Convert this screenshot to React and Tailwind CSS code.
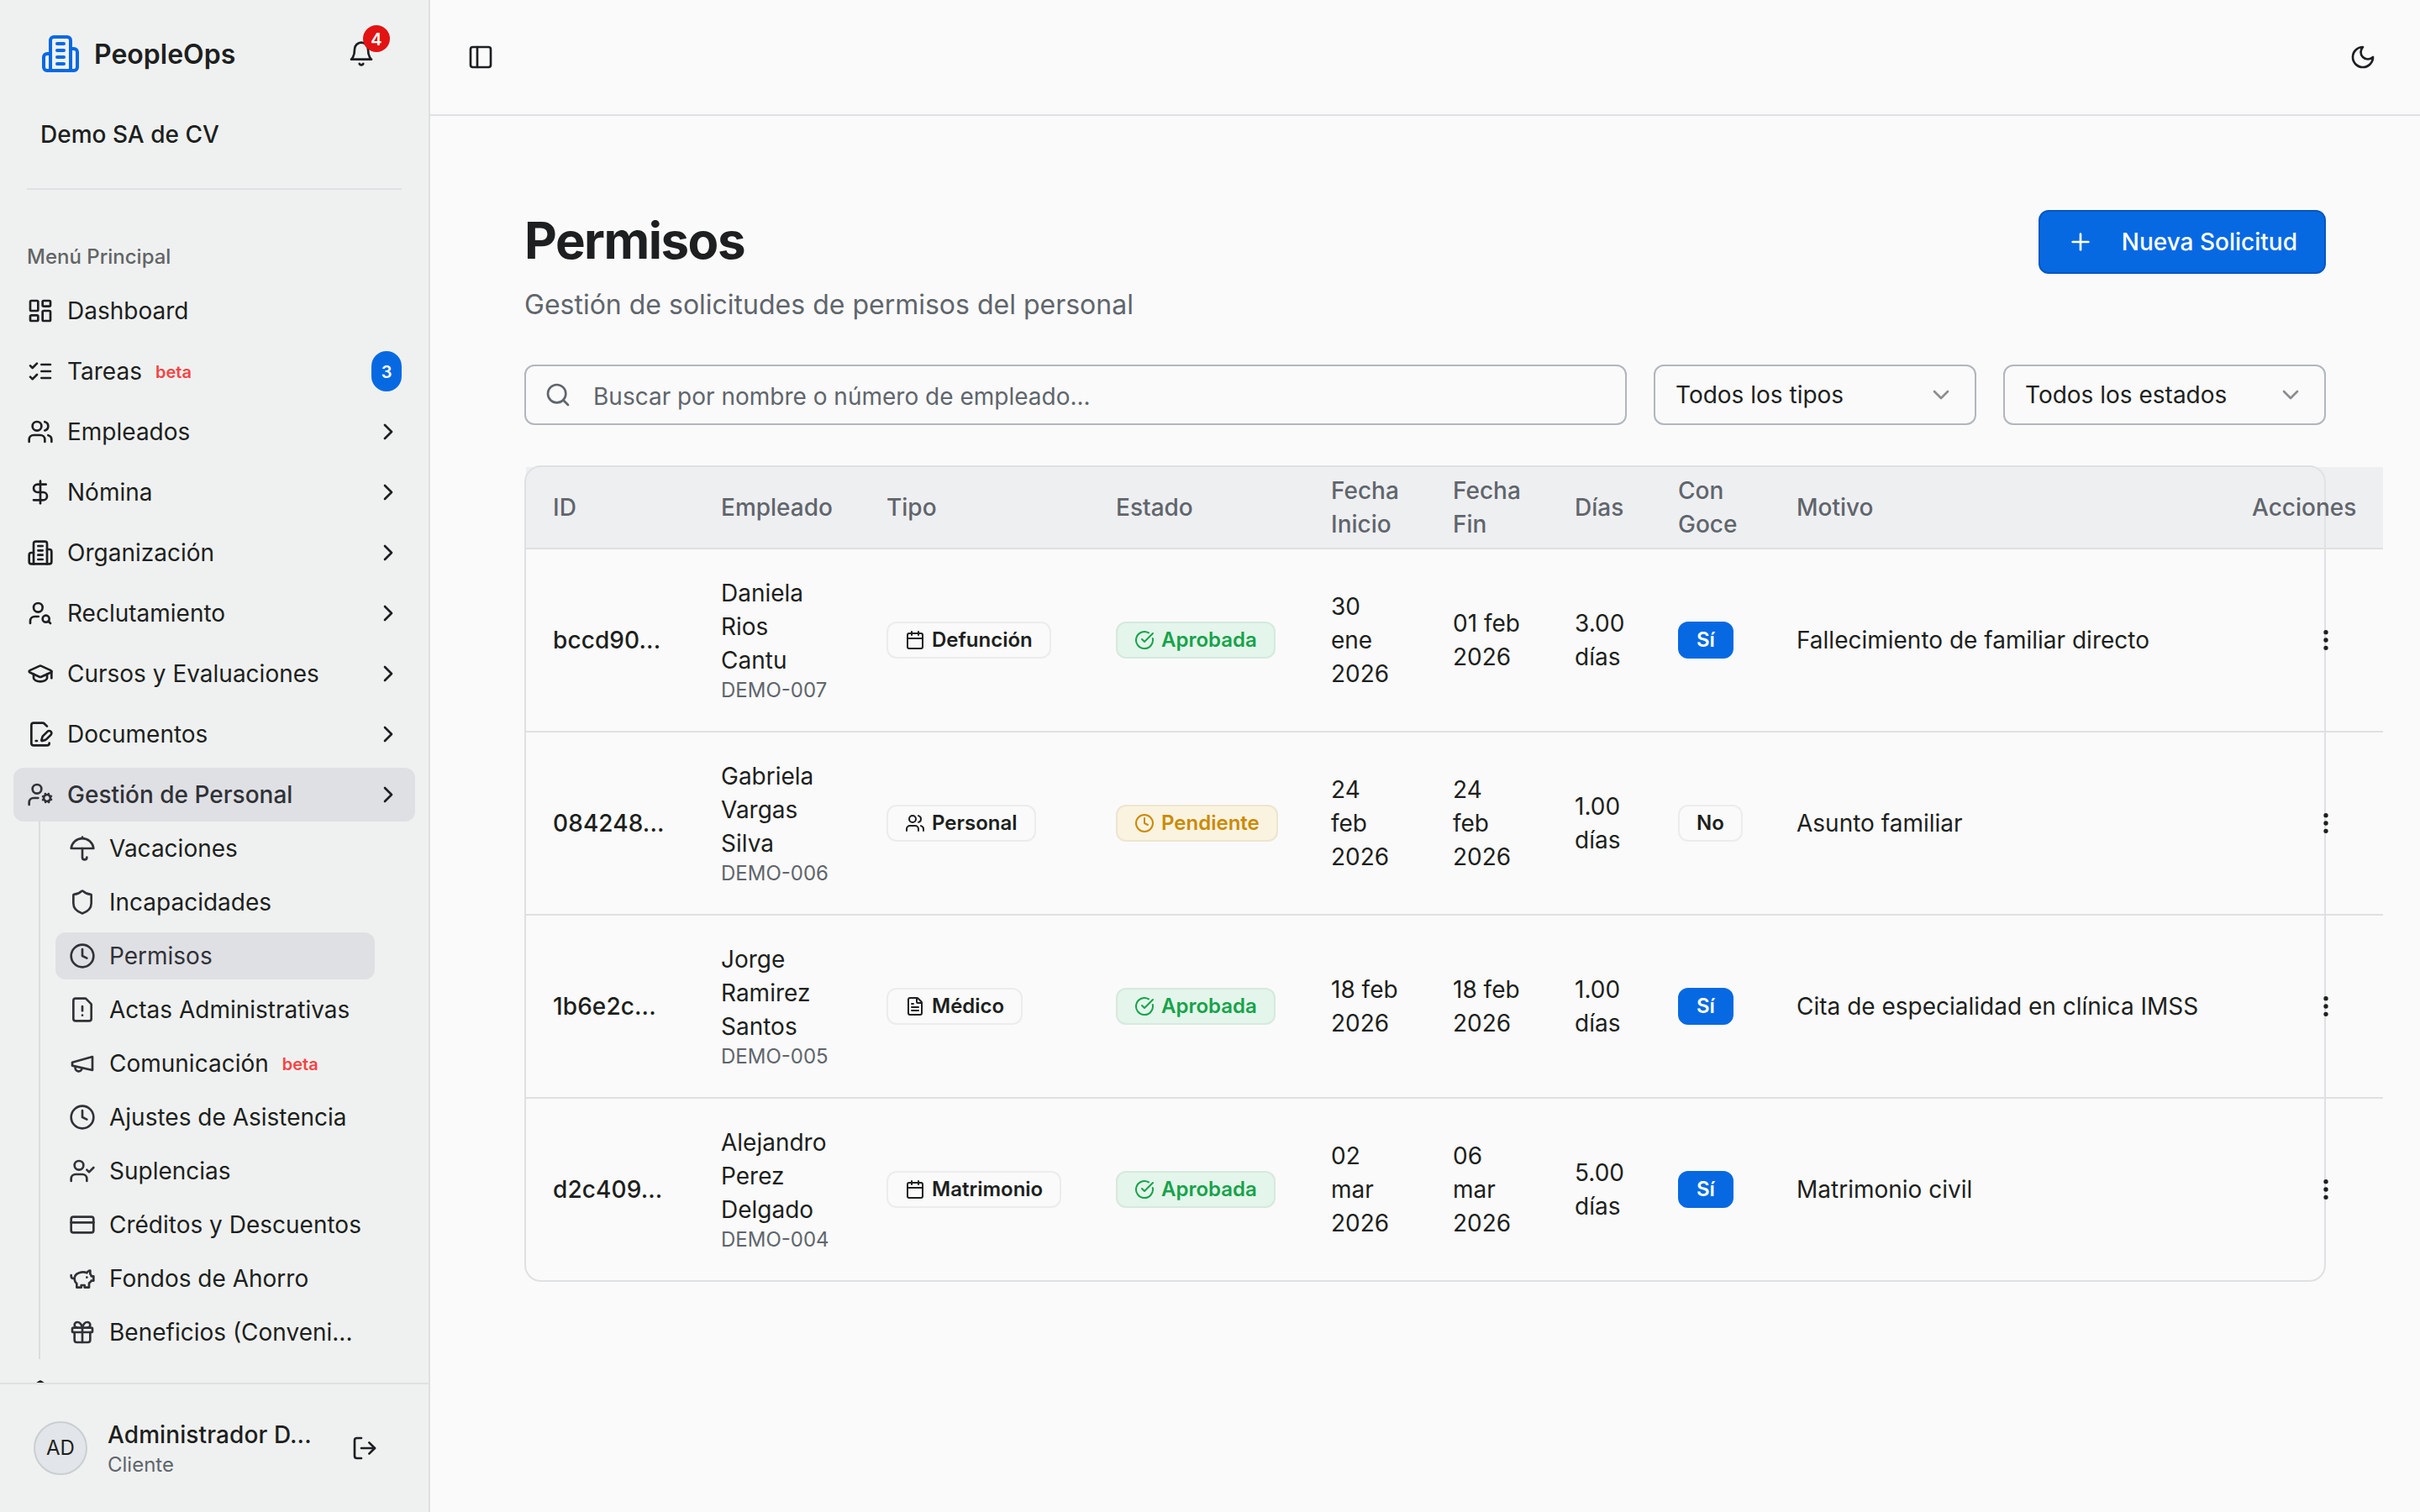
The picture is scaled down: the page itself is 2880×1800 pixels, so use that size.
import React from 'react';
import {
    Calendar,
    ChevronDown,
    ChevronRight,
    Clock,
    CreditCard,
    DollarSign,
    EllipsisVertical,
    FileText,
    Gift,
    GraduationCap,
    LayoutDashboard,
    LogOut,
    PanelLeft,
    Plus,
    Search,
    Shield,
    UserCheck,
    UserSearch,
    Users,
} from 'lucide-react';

const Icon = ({ className, children }) => (
    <svg viewBox="0 0 24 24" fill="none" stroke="currentColor" strokeWidth="2" strokeLinecap="round" strokeLinejoin="round" className={className}>
        {children}
    </svg>
);

const BuildingIcon = ({ className }) => (
    <Icon className={className}>
        <path d="M6 22V4a2 2 0 0 1 2-2h8a2 2 0 0 1 2 2v18Z" />
        <path d="M6 12H4a2 2 0 0 0-2 2v6a2 2 0 0 0 2 2h2" />
        <path d="M18 9h2a2 2 0 0 1 2 2v9a2 2 0 0 1-2 2h-2" />
        <path d="M10 6h4M10 10h4M10 14h4M10 18h4" />
    </Icon>
);

const BellIcon = ({ className }) => (
    <Icon className={className}>
        <path d="M6 8a6 6 0 0 1 12 0c0 7 3 9 3 9H3s3-2 3-9" />
        <path d="M10.3 21a1.94 1.94 0 0 0 3.4 0" />
    </Icon>
);

const TasksIcon = ({ className }) => (
    <Icon className={className}>
        <path d="m3 17 2 2 4-4" />
        <path d="m3 7 2 2 4-4" />
        <path d="M13 6h8M13 12h8M13 18h8" />
    </Icon>
);

const FileEditIcon = ({ className }) => (
    <Icon className={className}>
        <path d="m18 5-2.414-2.414A2 2 0 0 0 14.172 2H6a2 2 0 0 0-2 2v16a2 2 0 0 0 2 2h12a2 2 0 0 0 2-2" />
        <path d="M21.378 12.626a1 1 0 0 0-3.004-3.004l-4.01 4.012a2 2 0 0 0-.506.854l-.837 2.87a.5.5 0 0 0 .62.62l2.87-.837a2 2 0 0 0 .854-.506z" />
        <path d="M8 18h1" />
    </Icon>
);

const UserCogIcon = ({ className }) => (
    <Icon className={className}>
        <circle cx="18" cy="15" r="3" />
        <circle cx="9" cy="7" r="4" />
        <path d="M10 15H6a4 4 0 0 0-4 4v2" />
        <path d="m21.7 16.4-.9-.3M15.2 13.9l-.9-.3M16.6 18.7l.3-.9M19.1 12.2l.3-.9" />
        <path d="m19.6 18.7-.4-1M16.8 12.3l-.4-1M14.3 16.6l1-.4M20.7 13.8l1-.4" />
    </Icon>
);

const UmbrellaIcon = ({ className }) => (
    <Icon className={className}>
        <path d="M22 12a10.06 10.06 1 0 0-20 0Z" />
        <path d="M12 12v8a2 2 0 0 0 4 0" />
        <path d="M12 2v1" />
    </Icon>
);

const FileWarningIcon = ({ className }) => (
    <Icon className={className}>
        <path d="M15 2H6a2 2 0 0 0-2 2v16a2 2 0 0 0 2 2h12a2 2 0 0 0 2-2V7Z" />
        <path d="M12 9v4" />
        <path d="M12 17h.01" />
    </Icon>
);

const MegaphoneIcon = ({ className }) => (
    <Icon className={className}>
        <path d="m3 11 18-5v12L3 14v-3z" />
        <path d="M11.6 16.8a3 3 0 1 1-5.8-1.6" />
    </Icon>
);

const PiggyIcon = ({ className }) => (
    <Icon className={className}>
        <path d="M19 5c-1.5 0-2.8 1.4-3 2-3.5-1.5-11-.3-11 5 0 1.8 0 3 2 4.5V20h4v-2h3v2h4v-4c1-.5 1.7-1 2-2h2v-4h-2c0-1-.5-1.5-1-2V5z" />
        <path d="M2 9v1c0 1.1.9 2 2 2h1" />
        <path d="M16 11h.01" />
    </Icon>
);

const MoonIcon = ({ className }) => (
    <Icon className={className}>
        <path d="M12 3a6 6 0 0 0 9 9 9 9 0 1 1-9-9Z" />
    </Icon>
);

const CheckIcon = ({ className }) => (
    <Icon className={className}>
        <path d="M21.801 10A10 10 0 1 1 17 3.335" />
        <path d="m9 11 3 3L22 4" />
    </Icon>
);

const menu = [
    { label: 'Dashboard', icon: LayoutDashboard },
    { label: 'Tareas', icon: TasksIcon, beta: true, count: 3 },
    { label: 'Empleados', icon: Users, sub: true },
    { label: 'Nómina', icon: DollarSign, sub: true },
    { label: 'Organización', icon: BuildingIcon, sub: true },
    { label: 'Reclutamiento', icon: UserSearch, sub: true },
    { label: 'Cursos y Evaluaciones', icon: GraduationCap, sub: true },
    { label: 'Documentos', icon: FileEditIcon, sub: true },
    { label: 'Gestión de Personal', icon: UserCogIcon, sub: true, active: true },
];

const submenu = [
    { label: 'Vacaciones', icon: UmbrellaIcon },
    { label: 'Incapacidades', icon: Shield },
    { label: 'Permisos', icon: Clock, active: true },
    { label: 'Actas Administrativas', icon: FileWarningIcon },
    { label: 'Comunicación', icon: MegaphoneIcon, beta: true },
    { label: 'Ajustes de Asistencia', icon: Clock },
    { label: 'Suplencias', icon: UserCheck },
    { label: 'Créditos y Descuentos', icon: CreditCard },
    { label: 'Fondos de Ahorro', icon: PiggyIcon },
    { label: 'Beneficios (Conveni...', icon: Gift },
];

const columns = [
    { label: 'ID', width: 'w-[200px]' },
    { label: 'Empleado', width: 'w-[197px]' },
    { label: 'Tipo', width: 'w-[273px]' },
    { label: 'Estado', width: 'w-[256px]' },
    { label: 'Fecha Inicio', width: 'w-[145px]' },
    { label: 'Fecha Fin', width: 'w-[145px]' },
    { label: 'Días', width: 'w-[123px]' },
    { label: 'Con Goce', width: 'w-[141px]' },
    { label: 'Motivo', width: 'w-[542px]' },
    { label: 'Acciones', width: 'w-[188px]' },
];

const rows = [
    { id: 'bccd90...', name: ['Daniela', 'Rios', 'Cantu'], code: 'DEMO-007', type: 'Defunción', icon: Calendar, approved: true, start: ['30', 'ene', '2026'], end: ['01 feb', '2026'], days: '3.00', paid: true, reason: 'Fallecimiento de familiar directo' },
    { id: '084248...', name: ['Gabriela', 'Vargas', 'Silva'], code: 'DEMO-006', type: 'Personal', icon: Users, approved: false, start: ['24', 'feb', '2026'], end: ['24', 'feb', '2026'], days: '1.00', paid: false, reason: 'Asunto familiar' },
    { id: '1b6e2c...', name: ['Jorge', 'Ramirez', 'Santos'], code: 'DEMO-005', type: 'Médico', icon: FileText, approved: true, start: ['18 feb', '2026'], end: ['18 feb', '2026'], days: '1.00', paid: true, reason: 'Cita de especialidad en clínica IMSS' },
    { id: 'd2c409...', name: ['Alejandro', 'Perez', 'Delgado'], code: 'DEMO-004', type: 'Matrimonio', icon: Calendar, approved: true, start: ['02', 'mar', '2026'], end: ['06', 'mar', '2026'], days: '5.00', paid: true, reason: 'Matrimonio civil' },
];

const Lines = ({ items }) => items.map((item, index) => <div key={index}>{item}</div>);

const Beta = () => <span className="ml-4 pt-0.5 text-[20px] leading-[32px] font-semibold text-[#f44444]">beta</span>;

const Sidebar = () => (
    <aside className="w-[512px] h-full shrink-0 flex flex-col bg-[#eff1f0] border-r-2 border-[#dfe0e1]">
        <div className="h-[226px] shrink-0 mx-8 border-b-2 border-[#dfe0e1]">
            <div className="h-[128px] pl-4 pr-4 flex items-center">
                <BuildingIcon className="size-12 text-[#0769e2]" />
                <span className="ml-4 pt-0.5 text-[32px] leading-[40px] font-semibold">PeopleOps</span>
                <div className="relative ml-auto mr-4">
                    <BellIcon className="size-8" />
                    <span className="absolute -top-[18px] left-[18px] size-8 pt-0.5 rounded-full bg-[#e21313] text-white text-[20px] font-semibold flex items-center justify-center">4</span>
                </div>
            </div>
            <div className="pl-4 pt-3 text-[28px] leading-[40px] font-medium">Demo SA de CV</div>
        </div>

        <div className="flex-1 min-h-0 overflow-hidden px-4">
            <div className="mt-12 h-16 px-4 flex items-center text-[24px] font-medium text-[#626566]">Menú Principal</div>
            <nav className="flex flex-col gap-2">
                {menu.map((item) => (
                    <div key={item.label} className={`h-16 px-4 rounded-xl flex items-center text-[28px] ${item.active ? 'bg-[#dfe0e4] text-[#303237] font-medium' : ''}`}>
                        <item.icon className="size-8 shrink-0" />
                        <span className="ml-4">{item.label}</span>
                        {item.beta && <Beta />}
                        {item.count && <span className="ml-auto w-9 h-12 pt-0.5 rounded-full bg-[#0769e2] text-white text-[20px] font-semibold flex items-center justify-center">{item.count}</span>}
                        {item.sub && <ChevronRight className="ml-auto size-8 text-[#1d1f20]" />}
                    </div>
                ))}
            </nav>
            <div className="ml-[30px] mr-12 pl-[18px] py-1 border-l-2 border-[#dadcdd] flex flex-col gap-2">
                {submenu.map((item) => (
                    <div key={item.label} className={`h-14 px-4 rounded-xl flex items-center text-[28px] whitespace-nowrap ${item.active ? 'bg-[#dfe0e4] text-[#303237]' : ''}`}>
                        <item.icon className="size-8 shrink-0 text-[#303237]" />
                        <span className="ml-4">{item.label}</span>
                        {item.beta && <Beta />}
                    </div>
                ))}
            </div>
            <div className="mt-6 px-4">
                <Shield className="size-8" />
            </div>
        </div>

        <div className="h-[154px] shrink-0 border-t-2 border-[#dfe0e1] pl-10 pr-[60px] flex items-center">
            <div className="size-16 shrink-0 rounded-full border-2 border-[#cbced1] bg-[#e2e5e9] flex items-center justify-center text-[24px]">AD</div>
            <div className="ml-6">
                <div className="text-[28px] leading-[40px] font-medium tracking-[0.1px]">Administrador D...</div>
                <div className="text-[24px] leading-[32px] text-[#60656c]">Cliente</div>
            </div>
            <LogOut className="ml-auto size-8" />
        </div>
    </aside>
);

const Select = ({ label }) => (
    <div className="w-[384px] h-[72px] shrink-0 px-6 rounded-xl border-2 border-[#b1b6bd] flex items-center justify-between text-[28px]">
        {label}
        <ChevronDown className="size-8 text-[#8b8d8f]" />
    </div>
);

const badge = 'inline-flex items-center h-11 px-5 rounded-xl border-2 text-[24px] font-semibold';

const PermissionsTable = () => (
    <div className="mt-12 h-[972px] rounded-[20px] border-2 border-[#dfe0e1]">
        <table className="table-fixed w-[2210px] border-separate border-spacing-0 text-[28px] leading-[40px] text-left">
            <thead>
                <tr className="h-[98px] bg-[#e2e4e8]/50 text-[#60656c]">
                    {columns.map((col) => (
                        <th key={col.label} className={`${col.width} px-8 py-0 font-medium border-b-2 border-[#dfe0e1]`}>{col.label}</th>
                    ))}
                </tr>
            </thead>
            <tbody>
                {rows.map((row) => (
                    <tr key={row.id} className="h-[218px] last:h-[216px] *:px-8 *:py-0 *:border-b-2 *:border-[#dfe0e1] last:*:border-b-0">
                        <td className="font-medium tracking-[0.1px]">{row.id}</td>
                        <td>
                            <Lines items={row.name} />
                            <div className="text-[24px] leading-[32px] text-[#60656c]">{row.code}</div>
                        </td>
                        <td>
                            <span className={`${badge} border-[#ececed]`}>
                                <row.icon className="size-6 mr-2" />
                                {row.type}
                            </span>
                        </td>
                        <td>
                            {row.approved ? (
                                <span className={`${badge} border-[#d6e9de] bg-[#e4f5eb] text-[#16a34a]`}>
                                    <CheckIcon className="size-6 mr-2" />
                                    Aprobada
                                </span>
                            ) : (
                                <span className={`${badge} border-[#ede5d0] bg-[#faf3e0] text-[#ca8a04]`}>
                                    <Clock className="size-6 mr-2" />
                                    Pendiente
                                </span>
                            )}
                        </td>
                        <td><Lines items={row.start} /></td>
                        <td><Lines items={row.end} /></td>
                        <td><Lines items={[row.days, 'días']} /></td>
                        <td>
                            {row.paid ? (
                                <span className={`${badge} border-[#0769e2] bg-[#0769e2] text-white`}>Sí</span>
                            ) : (
                                <span className={`${badge} border-[#ececed]`}>No</span>
                            )}
                        </td>
                        <td className="whitespace-nowrap">{row.reason}</td>
                        <td>
                            <EllipsisVertical className="ml-auto mr-5 size-8" />
                        </td>
                    </tr>
                ))}
            </tbody>
        </table>
    </div>
);

export default function App() {
    return (
        <div className="w-[2880px] h-[1800px] flex overflow-hidden bg-[#fafafa] font-['Inter',sans-serif] text-[#1d1f20]">
            <Sidebar />
            <div className="flex-1 min-w-0 flex flex-col">
                <header className="h-[138px] shrink-0 border-b-2 border-[#dfe0e1] px-11 flex items-center justify-between">
                    <PanelLeft className="size-8" />
                    <MoonIcon className="size-8 mr-2" />
                </header>

                <main className="p-28">
                    <div className="h-[136px] flex justify-between items-start">
                        <div>
                            <h1 className="text-[60px] leading-[72px] font-bold tracking-tight">Permisos</h1>
                            <p className="mt-[17px] text-[32px] leading-[48px] text-[#60656c]">Gestión de solicitudes de permisos del personal</p>
                        </div>
                        <button className="h-[76px] px-8 rounded-xl border-2 border-[#0657bd] bg-[#0769e2] text-white text-[28px] font-medium flex items-center">
                            <Plus className="size-8" />
                            <span className="ml-[33px]">Nueva Solicitud</span>
                        </button>
                    </div>

                    <div className="mt-12 flex gap-8">
                        <div className="flex-1 h-[72px] pl-[22px] pr-6 rounded-xl border-2 border-[#b1b6bd] flex items-center text-[28px] text-[#60656c]">
                            <Search className="size-8" />
                            <span className="ml-[26px] pt-1">Buscar por nombre o número de empleado...</span>
                        </div>
                        <Select label="Todos los tipos" />
                        <Select label="Todos los estados" />
                    </div>

                    <PermissionsTable />
                </main>
            </div>
        </div>
    );
}
